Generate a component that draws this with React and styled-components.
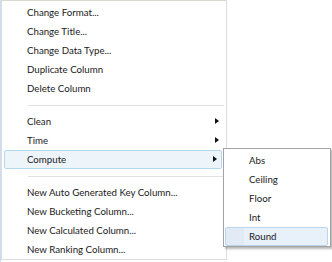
import React from "react";
import styled, { createGlobalStyle } from "styled-components";

const GlobalStyle = createGlobalStyle`
  html, body {
    margin: 0;
    padding: 0;
    background: linear-gradient(to right, #c9def4 0, #c9def4 1px, #ffffff 1px);
  }
  body {
    font-family: Lato, "Liberation Sans", Arial, sans-serif;
    font-size: 9.7px;
    color: #1a1a1a;
  }
`;

const mainItems = [
  ["Change Format..."],
  ["Change Title..."],
  ["Change Data Type..."],
  ["Duplicate Column"],
  ["Delete Column"],
  "sep",
  ["Clean", "sub"],
  ["Time", "sub"],
  ["Compute", "sub", "active"],
  "sep",
  ["New Auto Generated Key Column..."],
  ["New Bucketing Column..."],
  ["New Calculated Column..."],
  ["New Ranking Column..."],
];

const subItems = ["Abs", "Ceiling", "Floor", "Int", "Round"];

function App() {
  return (
    <Page>
      <GlobalStyle />
      <Menu>
        {mainItems.map((item, index) =>
          item === "sep" ? (
            <Separator key={index} />
          ) : (
            <Item key={index} $active={item[2] === "active"}>
              {item[0]}
              {item[1] === "sub" && <Arrow />}
            </Item>
          )
        )}
      </Menu>
      <SubMenu>
        {subItems.map((label) => (
          <SubItem key={label} $active={label === "Round"}>
            {label}
          </SubItem>
        ))}
      </SubMenu>
    </Page>
  );
}

export default App;

const Page = styled.div`
  position: relative;
  width: 332px;
  height: 262px;
  padding-left: 1px;
  box-sizing: border-box;
  overflow: hidden;
`;

const Menu = styled.div`
  width: 226px;
  height: 260px;
  box-sizing: border-box;
  border: 1px solid #dddddd;
  border-top-color: #d8d8d2;
  background: #ffffff;
  padding: 2px 2px 0 2px;
  display: flex;
  flex-direction: column;
`;

const Item = styled.div`
  position: relative;
  height: 19px;
  line-height: 17px;
  padding-left: 22px;
  box-sizing: border-box;
  white-space: nowrap;
  border: 1px solid ${(p) => (p.$active ? "#b2d9ef" : "transparent")};
  border-radius: 2px;
  background: ${(p) => (p.$active ? "#edf4fa" : "transparent")};
  margin-right: ${(p) => (p.$active ? "2px" : "0")};
`;

const Arrow = styled.span`
  position: absolute;
  right: 4px;
  top: 5px;
  width: 0;
  height: 0;
  border-top: 3.5px solid transparent;
  border-bottom: 3.5px solid transparent;
  border-left: 4px solid #111111;
`;

const Separator = styled.div`
  height: 14px;
  margin-left: 24px;
  display: flex;
  align-items: center;
  &::after {
    content: "";
    flex: 1;
    height: 1px;
    background: #e2e2e2;
  }
`;

const SubMenu = styled.div`
  position: absolute;
  left: 223px;
  top: 148px;
  width: 108px;
  height: 99px;
  box-sizing: border-box;
  border: 1px solid #a3a3a3;
  background: #ffffff;
  box-shadow: 2px 2px 2px rgba(0, 0, 0, 0.28);
  padding: 2px 2px 0 1px;
  display: flex;
  flex-direction: column;
`;

const SubItem = styled.div`
  height: 19px;
  line-height: 17px;
  padding-left: 23px;
  box-sizing: border-box;
  border: 1px solid ${(p) => (p.$active ? "#bcd5ee" : "transparent")};
  border-radius: 2px;
  background: ${(p) =>
    p.$active
      ? "linear-gradient(to right, #e2ebf5 0, #e2ebf5 18px, #e8f0f9 18px)"
      : "transparent"};
`;
